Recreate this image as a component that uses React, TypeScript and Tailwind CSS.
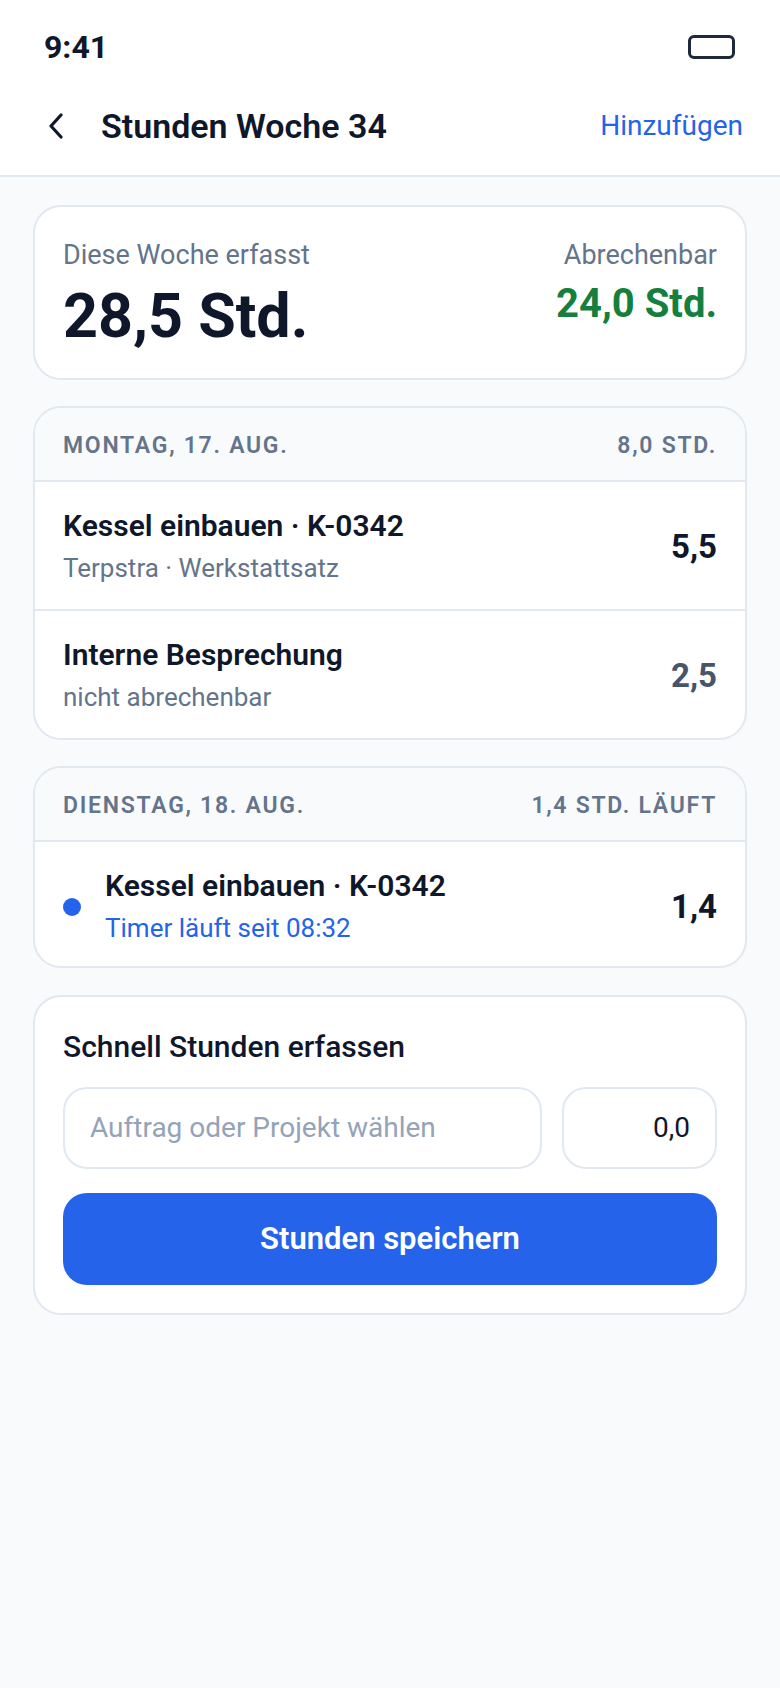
import React from "react";

const font = { fontFamily: "Roboto, 'Noto Sans', sans-serif" };

type Entry = {
  title: string;
  sub: string;
  hours: string;
  subClass?: string;
  hoursClass?: string;
  running?: boolean;
};

type Day = {
  label: string;
  total: string;
  entries: Entry[];
};

const days: Day[] = [
  {
    label: "Montag, 17. Aug.",
    total: "8,0 Std.",
    entries: [
      { title: "Kessel einbauen · K-0342", sub: "Terpstra · Werkstattsatz", hours: "5,5" },
      {
        title: "Interne Besprechung",
        sub: "nicht abrechenbar",
        hours: "2,5",
        hoursClass: "text-[#475569]",
      },
    ],
  },
  {
    label: "Dienstag, 18. Aug.",
    total: "1,4 Std. läuft",
    entries: [
      {
        title: "Kessel einbauen · K-0342",
        sub: "Timer läuft seit 08:32",
        hours: "1,4",
        subClass: "text-[#2563eb]",
        running: true,
      },
    ],
  },
];

function DayCard({ day }: { day: Day }) {
  return (
    <div className="rounded-[28px] border-2 border-[#e2e8f0] bg-white overflow-hidden">
      <div className="flex items-center justify-between bg-[#f8fafc] px-7 pt-[25px] pb-[21px] border-b-2 border-[#e2e8f0]">
        <span className="text-[23px] leading-[26px] font-semibold uppercase tracking-[0.075em] text-[#64748b]">
          {day.label}
        </span>
        <span className="text-[23px] leading-[26px] font-semibold uppercase tracking-[0.075em] text-[#64748b]">
          {day.total}
        </span>
      </div>
      {day.entries.map((e, i) => (
        <div
          key={i}
          className={`flex items-center px-7 pt-[26px] ${e.running ? "pb-[21px]" : "pb-[24px]"} ${
            i < day.entries.length - 1 ? "border-b-2 border-[#e2e8f0]" : ""
          }`}
        >
          {e.running && <span className="w-[18px] h-[18px] rounded-full bg-[#2563eb] mr-6 shrink-0" />}
          <div className="flex-1 min-w-0">
            <div className="text-[30px] leading-[36px] font-semibold text-[#0f172a]">{e.title}</div>
            <div className={`mt-[7px] text-[26px] leading-[34px] ${e.subClass ?? "text-[#64748b]"}`}>
              {e.sub}
            </div>
          </div>
          <span className={`text-[33px] font-bold ${e.hoursClass ?? "text-[#0f172a]"}`}>{e.hours}</span>
        </div>
      ))}
    </div>
  );
}

export default function App() {
  return (
    <div className="min-h-[1688px] bg-[#f8fafc]" style={font}>
      {/* Status bar + Navigation */}
      <div className="bg-white border-b-2 border-[#e2e8f0]">
        <div className="h-[94px] flex items-center justify-between pl-[44px] pr-[45px]">
          <span className="text-[32px] font-bold text-[#0f172a]">9:41</span>
          <span className="w-[47px] h-[24px] rounded-[6px] border-[3px] border-[#1e293b]" />
        </div>
        <div className="h-[64px] flex items-center pl-[48px] pr-[37px]">
          <svg width="17" height="26" viewBox="0 0 17 26" className="shrink-0">
            <polyline
              points="13,2 3,13 13,24"
              fill="none"
              stroke="#0f172a"
              strokeWidth="3.2"
              strokeLinecap="round"
              strokeLinejoin="round"
            />
          </svg>
          <h1 className="ml-[36px] text-[34px] font-semibold text-[#0f172a]">Stunden Woche 34</h1>
          <button className="ml-auto text-[28px] text-[#2563eb]">Hinzufügen</button>
        </div>
        <div className="h-[17px]" />
      </div>

      <div className="px-[33px] pt-[28px] flex flex-col gap-[26px]">
        {/* Summary */}
        <div className="rounded-[28px] border-2 border-[#e2e8f0] bg-white px-7 pt-[31px] pb-[18px] flex justify-between">
          <div>
            <div className="text-[27px] leading-[34px] text-[#64748b]">Diese Woche erfasst</div>
            <div className="text-[61px] leading-[88px] font-bold text-[#0f172a]">28,5 Std.</div>
          </div>
          <div className="text-right">
            <div className="text-[27px] leading-[34px] text-[#64748b]">Abrechenbar</div>
            <div className="text-[40px] leading-[64px] font-bold text-[#15803d]">24,0 Std.</div>
          </div>
        </div>

        {days.map((d) => (
          <DayCard key={d.label} day={d} />
        ))}

        {/* Quick entry */}
        <div className="mt-px rounded-[28px] border-2 border-[#e2e8f0] bg-white p-7">
          <div className="text-[30px] leading-[44px] font-medium text-[#0f172a]">Schnell Stunden erfassen</div>
          <div className="mt-[18px] flex gap-5">
            <div className="flex-1 h-[82px] rounded-[24px] border-2 border-[#e2e8f0] flex items-center px-[25px] text-[28px] text-[#94a3b8]">
              Auftrag oder Projekt wählen
            </div>
            <div className="w-[155px] h-[82px] rounded-[24px] border-2 border-[#e2e8f0] flex items-center justify-end px-[25px] text-[28px] text-[#0f172a]">
              0,0
            </div>
          </div>
          <button className="mt-6 w-full h-[92px] rounded-[24px] bg-[#2563eb] text-white text-[31px] font-semibold">
            Stunden speichern
          </button>
        </div>
      </div>
    </div>
  );
}
